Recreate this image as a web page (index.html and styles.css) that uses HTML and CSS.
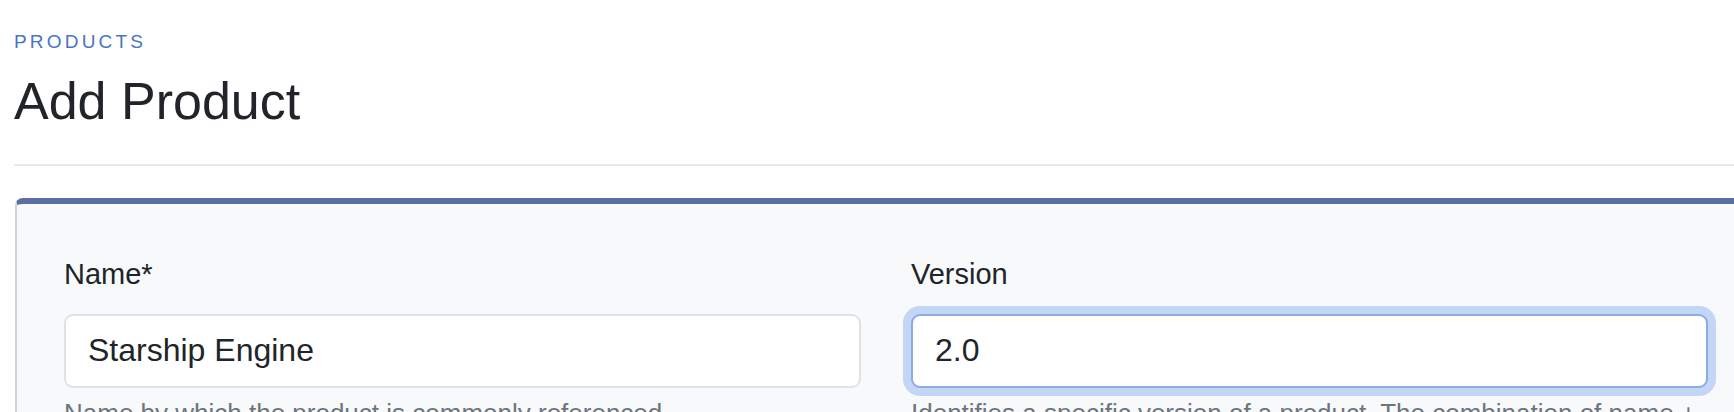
FILE: index.html
```html
<!DOCTYPE html>
<html lang="en">
<head>
<meta charset="utf-8">
<title>Add Product</title>
<link rel="stylesheet" href="styles.css">
</head>
<body>
<div class="page">
  <div class="eyebrow">PRODUCTS</div>
  <h1 class="title">Add Product</h1>
  <hr class="rule">
  <div class="card">
    <div class="row">
      <div class="field">
        <label class="label" for="name">Name*</label>
        <input class="control" id="name" type="text" value="Starship Engine">
        <div class="help">Name by which the product is commonly referenced</div>
      </div>
      <div class="field">
        <label class="label" for="version">Version</label>
        <input class="control control-focus" id="version" type="text" value="2.0">
        <div class="help">Identifies a specific version of a product. The combination of name + version must be unique.</div>
      </div>
    </div>
  </div>
</div>
</body>
</html>
```
FILE: styles.css
```css
html, body {
  margin: 0;
  padding: 0;
  background: #ffffff;
  overflow: hidden;
}
body {
  font-family: "Liberation Sans", Arial, Helvetica, sans-serif;
  color: #212529;
}
.page {
  margin-left: 14px;
  width: 1744px;
}
.eyebrow {
  margin-top: 29.6px;
  font-size: 19px;
  line-height: 23px;
  letter-spacing: 3.2px;
  color: #4a74c3;
}
.title {
  margin: 17.9px 0 0;
  font-size: 52px;
  line-height: 62px;
  font-weight: 400;
  color: #212529;
}
.rule {
  margin: 31.5px 0 0;
  height: 2px;
  border: 0;
  background: #e6eaee;
}
.card {
  margin-top: 32px;
  margin-left: 1px;
  border-top: 6px solid #5b6fa3;
  border-left: 2px solid #cfd2d6;
  border-radius: 8px 8px 0 0;
  background: #f8f9fa;
  padding: 53.5px 50px 40px 47px;
}
.row {
  display: grid;
  grid-template-columns: 1fr 1fr;
  gap: 50px;
}
.field {
  display: flex;
  flex-direction: column;
}
.label {
  display: block;
  font-size: 29px;
  line-height: 35px;
  margin-bottom: 21.5px;
  color: #212529;
}
.control {
  box-sizing: border-box;
  width: 100%;
  height: 74px;
  margin: 0;
  padding: 0 22px;
  border: 2px solid #dfe2e6;
  border-radius: 9px;
  background: #ffffff;
  font-family: "Liberation Sans", Arial, Helvetica, sans-serif;
  font-size: 32px;
  color: #212529;
  outline: none;
}
.control-focus {
  border-color: #8cabe6;
  box-shadow: 0 0 0 8px #c4d6f6;
}
.help {
  margin-top: 10px;
  font-size: 26px;
  line-height: 31px;
  color: #6c757d;
}
```
